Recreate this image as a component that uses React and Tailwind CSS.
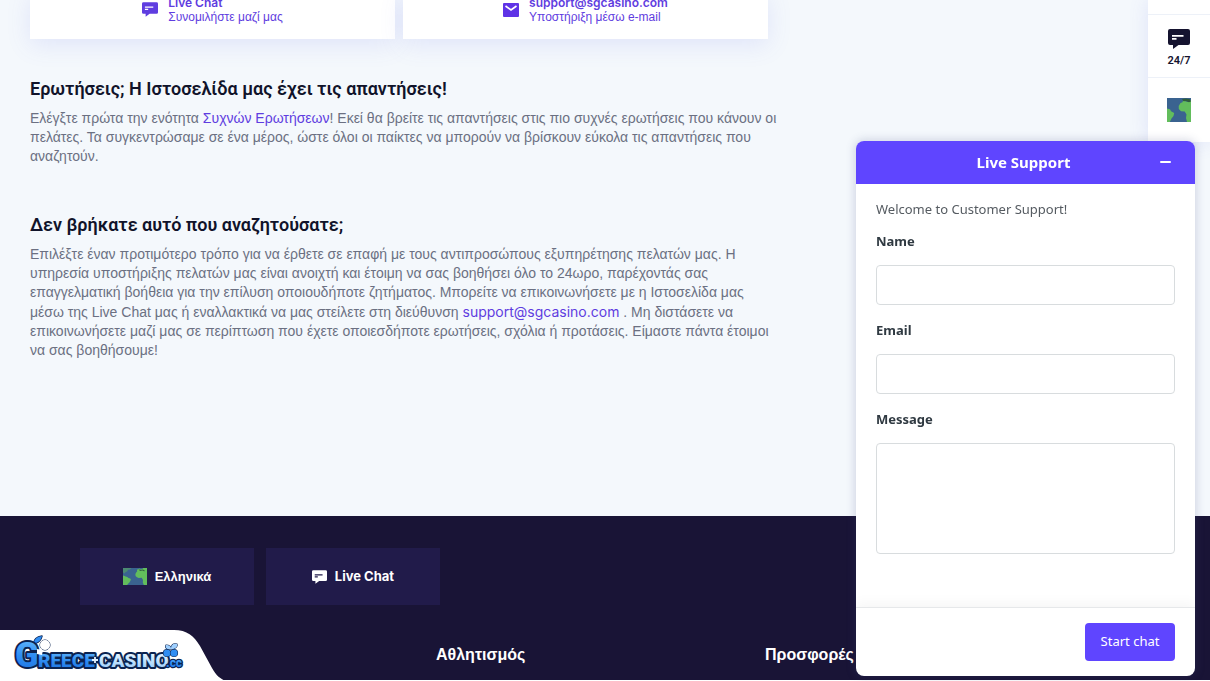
import React from "react";

function ChatIcon({ className }) {
  return (
    <svg viewBox="0 0 22 20" className={className} fill="currentColor" aria-hidden="true">
      <path
        fillRule="evenodd"
        d="M2 0h18a2 2 0 0 1 2 2v12a2 2 0 0 1-2 2H10.500L5 20v-4H2a2 2 0 0 1-2-2V2a2 2 0 0 1 2-2zM4 6v1.700h11.500V6zM4 9v1.700h4.500V9z"
      />
    </svg>
  );
}

function MailIcon({ className }) {
  return (
    <svg viewBox="0 0 16 14" className={className} aria-hidden="true">
      <rect width="16" height="14" rx="1" fill="#5f33e6" />
      <path d="M2.500 3l5.500 4 5.500-4" fill="none" stroke="#fff" strokeWidth="1.700" />
    </svg>
  );
}

function WorldFlag({ className, viewBox }) {
  return (
    <svg viewBox={viewBox} className={className} preserveAspectRatio="none" aria-hidden="true">
      <rect width="24" height="17" fill="#3a6390" />
      <path
        d="M0 7.500c1.500.2 2 1 3.500 1.200 1.300.2 1.500 1.300 2.800 1.600 1.500.4 2 1.200 1.200 2.200-.6.900-.5 1.700-1.700 2.500-.8.600-.9 1.500-1.800 2H0z"
        fill="#62bd5c"
      />
      <path d="M0 0h8.500L7 1.600 5 1.800 4.200 3.600 2.600 4l-.8 1.400L0 4.500z" fill="#4c8a72" />
      <path
        d="M24 0v17h-3.200l-1-2.500.2-2.600-1.300-2.200-3 .2c-1.600-.2-3-1-3.300-2.600-.2-1.600.6-3 1.700-3.900L14 1.800 16.500.6l1.200.9 1.900-.5L20 0z"
        fill="#62bd5c"
      />
      <path d="M15.500 1.200l2.500.9 2-.7 2.200 1.500-1.200.4-1.600-.7-2.400.5z" fill="#34603f" />
    </svg>
  );
}

function SmallWorldFlag({ className }) {
  return (
    <svg viewBox="0 0 24 24" className={className} aria-hidden="true">
      <rect width="24" height="24" fill="#3a6390" />
      <path d="M0 10.500l3 .8 1 2 3.200 1.700-.7 3-2 2.600-1.700 3.400H0z" fill="#62bd5c" />
      <path
        d="M24 1.500V24h-4l-1-4 .5-3.500-1.800-3-3.700-.3-2.200-2.200-.1-3L13.500 5l2-.8.500-1.700 4 1.200 2.500.3z"
        fill="#62bd5c"
      />
      <path d="M15 1l4-.5 4 .8 1 2.200-2 .7-3-1.200-2.500.3z" fill="#2f5d3c" />
    </svg>
  );
}

function BrandBadge() {
  return (
    <a href="#home" aria-label="Greece-Casino.cc" className="absolute bottom-0 left-0 block">
      <svg width="226" height="51" viewBox="0 0 226 51" className="block">
        <defs>
          <linearGradient id="blue" x1="0" y1="0" x2="0" y2="1">
            <stop offset="0" stopColor="#6cc0ff" />
            <stop offset="0.5" stopColor="#2f8df2" />
            <stop offset="1" stopColor="#1b6fe0" />
          </linearGradient>
          <linearGradient id="ice" x1="0" y1="0" x2="0" y2="1">
            <stop offset="0" stopColor="#ffffff" />
            <stop offset="0.5" stopColor="#c4e4ff" />
            <stop offset="1" stopColor="#8cc4f8" />
          </linearGradient>
        </defs>
        <path d="M0 0h174c13 0 20 6 26 16l12 22c4 7 8 11 14 13H0z" fill="#fff" />
        <g
          fontFamily="Roboto, 'Liberation Sans', sans-serif"
          fontWeight="900"
          stroke="#0b2350"
          strokeWidth="4"
          strokeLinejoin="round"
          paintOrder="stroke"
        >
          <path d="M34 13c0-3 2-6 8-7-1 4-3 6-6 7z" fill="#2f8df2" strokeWidth="1.500" />
          <path d="M90 30h9" fill="none" strokeWidth="7" />
          <text x="15" y="37" fontSize="35" fill="url(#blue)">G</text>
          <text x="38" y="37" fontSize="19" fill="url(#blue)">REECE</text>
          <text x="99" y="37" fontSize="19" fill="url(#ice)">CASINO</text>
          <text x="166" y="37" fontSize="12" strokeWidth="2.500" fill="url(#blue)">.cc</text>
          <path d="M92 30h6M95 27v6" fill="none" stroke="#e4f2ff" strokeWidth="1.800" />
          <circle cx="45" cy="15" r="5" fill="#fff" strokeWidth="1" />
          <path d="M37 19l6 1-1 5-5-1z" fill="#fff" stroke="none" />
          <circle cx="167" cy="23" r="3.500" fill="#2f8df2" strokeWidth="1.200" />
          <circle cx="174" cy="23" r="3.500" fill="#2f8df2" strokeWidth="1.200" />
          <path d="M171 19c-5 1-6-2-5-4 3 0 5 1 5 4 0-4 2-6 6-5 1 3-2 5-6 5z" fill="#9fd0ff" strokeWidth="1.200" />
        </g>
      </svg>
    </a>
  );
}

function Section({ title, children, className }) {
  return (
    <section className={className}>
      <h2 className="font-['Roboto',sans-serif] text-lg leading-6 font-semibold text-[#10132a]">{title}</h2>
      <p className="mt-2 text-sm leading-[19px] text-[#6b7082]">{children}</p>
    </section>
  );
}

function Field({ id, label, children }) {
  return (
    <div className="mb-[15px] flex flex-col">
      <label htmlFor={id} className="mb-[14px] text-[13px] leading-5 font-bold text-[#2f3941]">
        {label}
      </label>
      {children}
    </div>
  );
}

function LiveSupport() {
  const box = "w-full rounded border border-[#d8dcde] bg-white px-3 text-sm";
  return (
    <form
      aria-label="Live Support"
      className="fixed right-[15px] bottom-[5px] flex h-[535px] w-[339px] flex-col overflow-hidden rounded-lg bg-white font-['Noto_Sans',sans-serif] shadow-[0_0_8px_2px_rgba(60,70,120,0.18)]"
    >
      <header className="flex h-[43px] shrink-0 items-center bg-[#5f45ff] pr-5 pb-[2px] pl-9 text-white">
        <h2 className="flex-1 text-center text-[15px] leading-5 font-bold">Live Support</h2>
        <button type="button" aria-label="Minimize" className="flex h-6 w-5 items-center justify-center">
          <span className="h-[2px] w-[11px] rounded-full bg-white" />
        </button>
      </header>
      <div className="flex-1 px-5 pt-[15px]">
        <p className="mb-3 text-[13px] leading-5 text-[#555b61]">Welcome to Customer Support!</p>
        <Field id="name" label="Name">
          <input id="name" type="text" className={`h-10 ${box}`} />
        </Field>
        <Field id="email" label="Email">
          <input id="email" type="email" className={`h-10 ${box}`} />
        </Field>
        <Field id="message" label="Message">
          <textarea id="message" className={`h-[111px] resize-none ${box}`} />
        </Field>
      </div>
      <footer className="flex shrink-0 justify-end border-t border-[#e6e8ea] px-5 py-[15px] shadow-[0_-4px_12px_rgba(0,0,0,0.04)]">
        <button type="button" className="h-[38px] w-[90px] rounded bg-[#5f45ff] text-[13px] text-white">
          Start chat
        </button>
      </footer>
    </form>
  );
}

function SideBar() {
  return (
    <nav
      aria-label="Quick links"
      className="absolute top-0 right-0 flex w-[62px] flex-col bg-white pt-[14px] font-['Roboto',sans-serif] shadow-[0_0_20px_rgba(90,100,230,0.14)]"
    >
      <a
        href="#chat"
        className="flex h-16 flex-col items-center justify-center gap-1 border-y border-[#edf1f8] pt-[6px] text-[#15132f]"
      >
        <ChatIcon className="h-5 w-[22px]" />
        <span className="text-[11px] leading-4 font-semibold">24/7</span>
      </a>
      <button type="button" aria-label="Language" className="flex h-16 items-center justify-center">
        <SmallWorldFlag className="h-6 w-6" />
      </button>
    </nav>
  );
}

export default function App() {
  const card =
    "flex h-12 items-end justify-center gap-[10px] bg-white pb-[14px] text-[#5f3de0] shadow-[0_6px_24px_rgba(90,100,230,0.13)]";
  const tile =
    "flex h-[57px] w-[174px] items-center justify-center gap-2 bg-[#211b4a] text-[13px] font-bold text-white";
  return (
    <div className="relative flex min-h-screen flex-col overflow-hidden bg-white font-['Liberation_Sans',sans-serif]">
      <main className="h-[516px] bg-[#f4f8fc] px-[30px]">
        <div className="-mt-[9px] grid max-w-[738px] grid-cols-2 gap-2">
          <a href="#chat" className={card}>
            <ChatIcon className="mb-2 h-[15px] w-4" />
            <span className="flex flex-col text-xs leading-[15px]">
              <b className="font-['Inter',sans-serif] font-semibold">Live Chat</b>
              <span>Συνομιλήστε μαζί μας</span>
            </span>
          </a>
          <a href="mailto:support@sgcasino.com" className={card}>
            <MailIcon className="mb-2 h-[14px] w-4" />
            <span className="flex flex-col text-xs leading-[15px]">
              <b className="font-['Inter',sans-serif] font-semibold">support@sgcasino.com</b>
              <span>Υποστήριξη μέσω e-mail</span>
            </span>
          </a>
        </div>
        <div className="max-w-[754px]">
          <Section title="Ερωτήσεις; Η Ιστοσελίδα μας έχει τις απαντήσεις!" className="mt-[38px]">
            Ελέγξτε πρώτα την ενότητα{" "}
            <a href="#faq" className="text-[#5f3de0]">Συχνών Ερωτήσεων</a>! Εκεί θα βρείτε τις
            απαντήσεις στις πιο συχνές ερωτήσεις που κάνουν οι
            <br />
            πελάτες. Τα συγκεντρώσαμε σε ένα μέρος, ώστε όλοι οι παίκτες να μπορούν να βρίσκουν
            εύκολα τις απαντήσεις που
            <br />
            αναζητούν.
          </Section>
          <Section title="Δεν βρήκατε αυτό που αναζητούσατε;" className="mt-[47px]">
            Επιλέξτε έναν προτιμότερο τρόπο για να έρθετε σε επαφή με τους αντιπροσώπους εξυπηρέτησης
            πελατών μας. Η
            <br />
            υπηρεσία υποστήριξης πελατών μας είναι ανοιχτή και έτοιμη να σας βοηθήσει όλο το 24ωρο,
            παρέχοντάς σας
            <br />
            επαγγελματική βοήθεια για την επίλυση οποιουδήποτε ζητήματος. Μπορείτε να επικοινωνήσετε
            με η Ιστοσελίδα μας
            <br />
            μέσω της Live Chat μας ή εναλλακτικά να μας στείλετε στη διεύθυνση{" "}
            <a href="mailto:support@sgcasino.com" className="font-['Inter',sans-serif] text-[#5f3de0]">support@sgcasino.com</a>{" "}
            . Μη διστάσετε να
            <br />
            επικοινωνήσετε μαζί μας σε περίπτωση που έχετε οποιεσδήποτε ερωτήσεις, σχόλια ή
            προτάσεις. Είμαστε πάντα έτοιμοι
            <br />
            να σας βοηθήσουμε!
          </Section>
        </div>
      </main>
      <footer className="h-[164px] bg-[#191436] pt-8 text-white">
        <div className="flex gap-3 px-20">
          <button type="button" className={tile}>
            <WorldFlag viewBox="0 0 24 17" className="h-[17px] w-6" />
            Ελληνικά
          </button>
          <button type="button" className={tile}>
            <ChatIcon className="h-[14px] w-[15px]" />
            <span className="font-['Inter',sans-serif]">Live Chat</span>
          </button>
        </div>
        <div className="mt-[38px] grid grid-cols-3 pr-[116px] pl-[107px] text-base leading-6 font-bold">
          <h3 className="col-start-2">Αθλητισμός</h3>
          <h3>Προσφορές</h3>
        </div>
      </footer>
      <SideBar />
      <BrandBadge />
      <LiveSupport />
    </div>
  );
}
